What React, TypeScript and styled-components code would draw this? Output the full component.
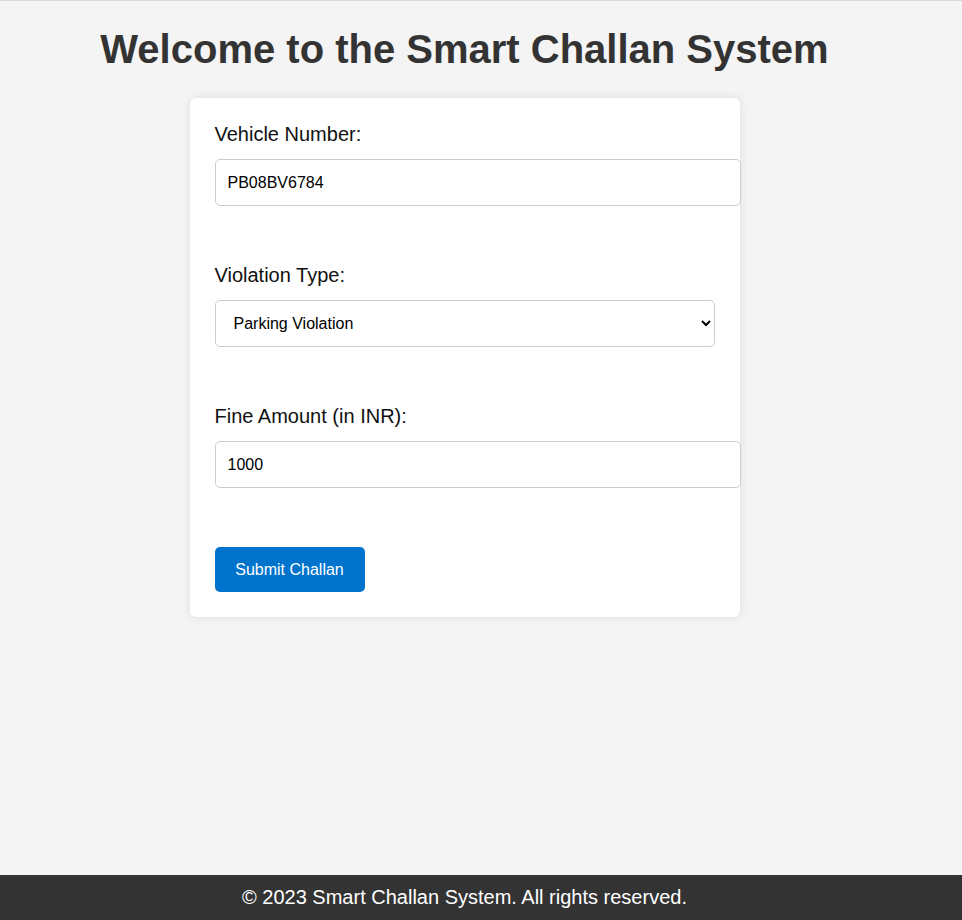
import * as React from "react";
import styled, { createGlobalStyle } from "styled-components";

const GlobalStyle = createGlobalStyle`
  html, body {
    margin: 0;
    padding: 0;
    background: #f4f4f4;
    font-family: Arial, "Liberation Sans", sans-serif;
  }
`;

const Page = styled.div`
  min-height: 100vh;
  display: flex;
  flex-direction: column;
  border-top: 1px solid #d9d9d9;
  box-sizing: border-box;
`;

const Main = styled.main`
  flex: 1;
  width: 929px;
  display: flex;
  flex-direction: column;
  align-items: center;
`;

const Title = styled.h1`
  margin: 25px 0 26px;
  font-size: 40px;
  line-height: 46px;
  font-weight: bold;
  color: #333;
`;

const Card = styled.form`
  width: 500px;
  padding: 25px;
  background: #fff;
  border-radius: 6px;
  box-shadow: 0 0 10px rgba(0, 0, 0, 0.1);
  display: flex;
  flex-direction: column;
`;

const Field = styled.div`
  display: flex;
  flex-direction: column;
  margin-bottom: 58px;
`;

const Label = styled.label`
  font-size: 20px;
  line-height: 23px;
  color: #111;
  margin-bottom: 13px;
`;

const TextInput = styled.input`
  width: 100%;
  height: 21px;
  padding: 12px;
  font-family: inherit;
  font-size: 16px;
  color: #000;
  border: 1px solid #ccc;
  border-radius: 5px;
  background: #fff;
  outline: none;
`;

const Select = styled.select`
  width: 500px;
  height: 47px;
  padding: 0 10px 0 14px;
  font-family: inherit;
  font-size: 16px;
  color: #000;
  border: 1px solid #ccc;
  border-radius: 5px;
  background: #fff;
  outline: none;
`;

const SubmitButton = styled.button`
  align-self: flex-start;
  margin-top: 1px;
  width: 150px;
  height: 45px;
  font-family: inherit;
  font-size: 16px;
  color: #fff;
  background: #0074cc;
  border: none;
  border-radius: 5px;
  cursor: pointer;
`;

const Footer = styled.footer`
  height: 45px;
  background: #333;
  color: #fff;
  font-size: 20px;
  line-height: 45px;
  padding-right: 33px;
  text-align: center;
`;

export default function App() {
  const [vehicle, setVehicle] = React.useState("PB08BV6784");
  const [violation, setViolation] = React.useState("parking");
  const [fine, setFine] = React.useState("1000");

  return (
    <>
      <GlobalStyle />
      <Page>
        <Main>
          <Title>Welcome to the Smart Challan System</Title>
          <Card onSubmit={e => e.preventDefault()}>
            <Field>
              <Label htmlFor="vehicle">Vehicle Number:</Label>
              <TextInput
                id="vehicle"
                value={vehicle}
                onChange={e => setVehicle(e.target.value)}
              />
            </Field>
            <Field>
              <Label htmlFor="violation">Violation Type:</Label>
              <Select
                id="violation"
                value={violation}
                onChange={e => setViolation(e.target.value)}
              >
                <option value="parking">Parking Violation</option>
                <option value="speeding">Speeding</option>
                <option value="signal">Signal Jumping</option>
                <option value="helmet">No Helmet</option>
              </Select>
            </Field>
            <Field>
              <Label htmlFor="fine">Fine Amount (in INR):</Label>
              <TextInput
                id="fine"
                type="number"
                value={fine}
                onChange={e => setFine(e.target.value)}
              />
            </Field>
            <SubmitButton type="submit">Submit Challan</SubmitButton>
          </Card>
        </Main>
        <Footer>© 2023 Smart Challan System. All rights reserved.</Footer>
      </Page>
    </>
  );
}
